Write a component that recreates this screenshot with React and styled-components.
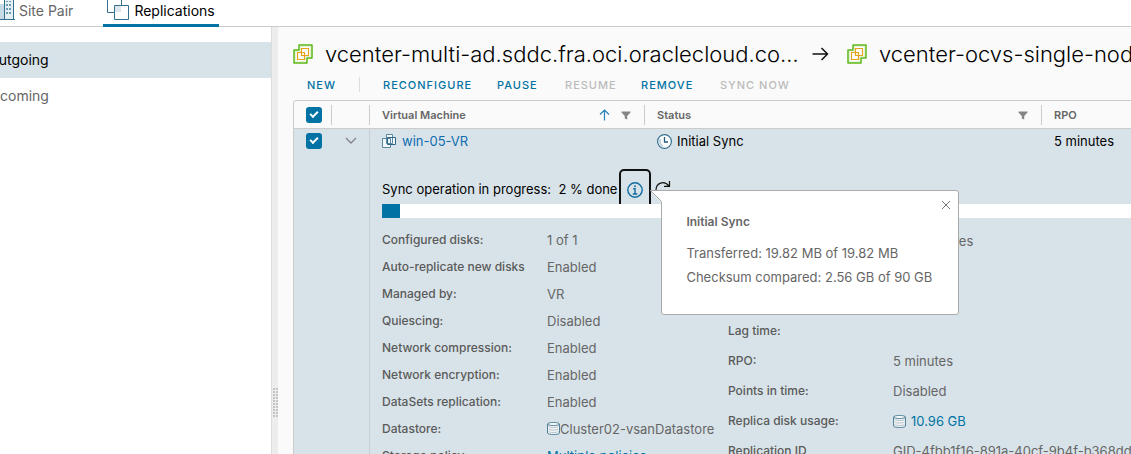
import React from "react";
import styled, { createGlobalStyle } from "styled-components";

const GlobalStyle = createGlobalStyle`
  *, *::before, *::after { box-sizing: border-box; }
  html, body { margin: 0; overflow: hidden; }
  body {
    font-family: Inter, "Open Sans", sans-serif;
    font-size: 13px;
    line-height: 18px;
    color: #666;
    background: #fff;
  }
  button { font: inherit; border: 0; padding: 0; background: none; cursor: pointer; }
  a { text-decoration: none; }
  svg { display: block; flex: none; }
`;

const Shell = styled.div`
  display: flex;
  flex-direction: column;
  height: 100vh;
  margin-left: -24px;
  overflow: hidden;
`;

const TabBar = styled.nav`
  display: flex;
  flex: none;
  gap: 26px;
  height: 27px;
  padding-left: 20px;
  border-bottom: 1px solid #ccc;
`;

const Tab = styled.a`
  display: flex;
  align-items: flex-start;
  gap: 4px;
  height: 27px;
  padding: 2px 4px 0;
  font-size: 14px;
  color: ${(p) => (p.$active ? "#000" : "#666")};
  box-shadow: ${(p) => (p.$active ? "inset 0 -3px #0072a3" : "none")};
  svg { margin-top: -2px; }
`;

const Body = styled.div`
  display: flex;
  flex: 1;
  min-height: 0;
`;

const Sidebar = styled.nav`
  flex: none;
  width: 295px;
  padding-top: 15px;
  background: #fff;
`;

const SideLink = styled.a`
  display: block;
  padding: 9px 12px;
  font-size: 14px;
  color: ${(p) => (p.$active ? "#000" : "#666")};
  background: ${(p) => (p.$active ? "#d8e3e9" : "transparent")};
`;

const Splitter = styled.div`
  display: flex;
  flex: none;
  justify-content: flex-end;
  width: 7px;
  padding-top: 361px;
  background: #ededed;
  border-left: 1px solid #ddd;
`;

const Main = styled.main`
  flex: 1;
  min-width: 0;
  padding: 12px 0 0 15px;
  background: #fafafa;
  overflow: hidden;
`;

const TitleBar = styled.header`
  display: flex;
  align-items: center;
  height: 30px;
`;

const SiteName = styled.h1`
  flex: none;
  width: ${(p) => p.$width || "auto"};
  margin: 0 0 0 12px;
  font-size: 22px;
  font-weight: 300;
  line-height: 30px;
  color: #000;
  white-space: nowrap;
`;

const ArrowBox = styled.span`
  margin: 0 18px 0 10px;
`;

const Toolbar = styled.div`
  display: flex;
  align-items: center;
  height: 31px;
  padding-left: 14px;
`;

const Action = styled.button`
  font-size: 11px !important;
  font-weight: 500 !important;
  letter-spacing: 1px;
  text-align: left;
  width: ${(p) => p.$width};
  white-space: nowrap;
  color: ${(p) => (p.disabled ? "#bbb" : "#0072a3")};
`;

const Divider = styled.span`
  width: 1px;
  height: 15px;
  margin-right: 23px;
  background: #ddd;
`;

const Grid = styled.table`
  width: 100%;
  min-width: 1002px;
  table-layout: fixed;
  border-collapse: separate;
  border-spacing: 0;
  border: 1px solid #ccc;
  border-radius: 3px 0 0 0;
`;

const HeadCell = styled.th`
  height: 28px;
  padding: 4px 0 3px;
  font-size: 11px;
  font-weight: 600;
  text-align: left;
  border-bottom: 1px solid #ccc;
`;

const HeadInner = styled.div`
  display: flex;
  align-items: center;
  gap: 11px;
  height: 20px;
  padding: 0 13px 0 12px;
  border-left: ${(p) => (p.$plain ? "0" : "1px solid #ccc")};
  span { flex: 1; }
`;

const Cell = styled.td`
  padding: 3px 0 0 ${(p) => p.$pad || "12px"};
  height: 25px;
  color: #000;
  vertical-align: top;
  background: #d8e3e9;
  border-left: ${(p) => (p.$line ? "1px solid #c8ced2" : "0")};
`;

const CellInner = styled.div`
  display: flex;
  align-items: center;
  gap: 5px;
  height: 18px;
`;

const DetailCell = styled(Cell)`
  padding: 14px 10px 0 12px;
`;

const Check = styled.input`
  appearance: none;
  display: block;
  position: relative;
  flex: none;
  width: 16px;
  height: 16px;
  margin: 0;
  background: #0072a3;
  border-radius: 3px;
  &::after {
    content: "";
    position: absolute;
    left: 4px;
    top: 4px;
    width: 8px;
    height: 5px;
    border: solid #fff;
    border-width: 0 0 2px 2px;
    transform: rotate(-45deg);
  }
`;

const Link = styled.a`
  color: ${(p) => (p.$bright ? "#0f6cb0" : "#0072a3")};
`;

const SyncLine = styled.div`
  display: flex;
  align-items: flex-start;
  height: 36px;
  color: #000;
`;

const SyncText = styled.span`
  padding-top: 12px;
  white-space: pre;
`;

const InfoAnchor = styled.div`
  position: relative;
  margin: 1px 0 0 2px;
`;

const InfoButton = styled.button`
  display: flex;
  justify-content: center;
  width: 32px;
  height: 42px;
  padding-top: 11px !important;
  border: 2px solid #111 !important;
  border-radius: 5px;
`;

const Refresh = styled.button`
  margin: 13px 0 0 4px;
`;

const Track = styled.div`
  position: relative;
  z-index: 1;
  height: 14px;
  background: #fff;
`;

const Fill = styled.div`
  height: 100%;
  background: #0072a3;
`;

const Popover = styled.section`
  position: absolute;
  z-index: 2;
  top: 21px;
  left: 42px;
  width: 298px;
  height: 125px;
  padding: 22px 24px;
  color: #666;
  background: #fff;
  border: 1px solid #aaa;
  border-radius: 0 3px 3px 3px;
  white-space: nowrap;
  h2 { margin: 0 0 10px; font-size: 12px; line-height: 18px; font-weight: 600; }
  p { margin: 0; line-height: 24px; }
`;

const Pointer = styled.svg`
  position: absolute;
  top: -1px;
  left: -12px;
`;

const Close = styled.button`
  position: absolute;
  top: 9px;
  right: 7px;
`;

const Details = styled.div`
  display: flex;
  align-items: flex-start;
  padding-top: 8px;
  color: #666;
`;

const DetailList = styled.dl`
  display: grid;
  grid-template-columns: 165px auto;
  grid-auto-rows: ${(p) => p.$row};
  align-items: center;
  flex: none;
  width: ${(p) => p.$width};
  margin: 0;
  white-space: nowrap;
`;

const Term = styled.dt`
  font-size: 12px;
  font-weight: 500;
  color: #5a5a5a;
`;

const Value = styled.dd`
  display: flex;
  align-items: center;
  gap: ${(p) => p.$gap || "0"};
  margin: 0;
`;

const BuildingIcon = () => (
  <svg width="15" height="20" viewBox="0 0 15 20" fill="none">
    <path d="M0 4h4v15H0z" fill="#c6dbe5" />
    <path d="M5 0h8v19H5z" fill="#e4eff4" />
    <path d="M4.500 0v19.500M13.500 0v19.500M0 19.500h15" stroke="#356f8e" />
    <path d="M6 4h2v2H6zM9 4h2v2H9zM6 8h2v2H6zM9 8h2v2H9zM6 12h2v2H6zM9 12h2v2H9zM6 1h2v1H6zM9 1h2v1H9z" fill="#6d9bb1" />
  </svg>
);

const ReplicaTabIcon = () => (
  <svg width="23" height="20" viewBox="0 0 23 20" fill="none" stroke="#356f8e">
    <path d="M8 6h6v6H8z" fill="#dce6eb" stroke="none" />
    <path d="M.500 0v12.500H8M14.500 0v6" />
    <path d="M7.500 5.500h14v14h-14z" />
  </svg>
);

const VcenterIcon = () => (
  <svg width="20" height="20" viewBox="0 0 20 20" fill="none">
    <path d="M6 1h13v13h-5v5H1V6h5z" fill="#fff" stroke="#5cb615" strokeWidth="1.500" strokeLinejoin="round" />
    <path d="M7.500 2.500h10v10h-5v5h-10v-10h5z" stroke="#e3f1d4" />
    <path d="M8.500 4.500h7v7h-7zM4.500 8.500h7v7h-7z" stroke="#e5a21a" strokeWidth="1.200" />
  </svg>
);

const VmIcon = () => (
  <svg width="15" height="15" viewBox="0 0 15 15" fill="none">
    <path d="M4 1h7v3h3v7H9v3H1V5h3z" fill="#f4f8fa" />
    <path d="M.500 4.500h8v9h-8z" stroke="#5b89a2" />
    <path d="M4.500.500h6v9h-6z" stroke="#5b89a2" />
    <path d="M5.500 3.500h8v7h-8z" stroke="#2c6585" />
  </svg>
);

const ClockIcon = () => (
  <svg width="15" height="15" viewBox="0 0 15 15" fill="none" stroke="#356f8e">
    <circle cx="7.500" cy="7.500" r="6.900" fill="#fff" strokeWidth="1.200" />
    <path d="M3.500 5A5 5 0 0 0 6 12" stroke="#c3d5de" strokeWidth="2" />
    <path d="M7.500 3v5H11" stroke="#245d7c" strokeWidth="1.300" />
  </svg>
);

const DiskIcon = () => (
  <svg width="13" height="13" viewBox="0 0 13 13" fill="none" stroke="#4f8198">
    <path d="M.500 2v9c0 2 12 2 12 0V2" fill="#f3f5f7" />
    <path d="M1.500 4.500c1 1.300 9 1.300 10 0M1.500 7c1 1.300 9 1.300 10 0M1.500 9.500c1 1.300 9 1.300 10 0" stroke="#b5c1c8" />
    <ellipse cx="6.500" cy="2" rx="6" ry="1.500" fill="#fff" />
  </svg>
);

const FilterIcon = () => (
  <svg width="10" height="9" viewBox="0 0 10 9">
    <path d="M.500.500h9v1L6.200 5v3.500L3.800 7.500V5L.500 1.500z" fill="#858585" />
  </svg>
);

const RightArrow = () => (
  <svg width="17" height="14" viewBox="0 0 17 14" fill="none" stroke="#111" strokeWidth="1.500">
    <path d="M.500 7h15M9.500 1l6 6-6 6" />
  </svg>
);

const leftDetails = [
  ["Configured disks:", "1 of 1"],
  ["Auto-replicate new disks", "Enabled"],
  ["Managed by:", "VR"],
  ["Quiescing:", "Disabled"],
  ["Network compression:", "Enabled"],
  ["Network encryption:", "Enabled"],
  ["DataSets replication:", "Enabled"],
  ["Datastore:", <><DiskIcon />Cluster02-vsanDatastore</>],
  ["Storage policy:", <Link href="#policies">Multiple policies</Link>],
];

const rightDetails = [
  ["Last sync duration:", "~ 22 minutes"],
  ["Last sync size:", ""],
  ["Last instance:", ""],
  ["Lag time:", ""],
  ["RPO:", "5 minutes"],
  ["Points in time:", "Disabled"],
  ["Replica disk usage:", <><DiskIcon /><Link href="#usage">10.96 GB</Link></>],
  ["Replication ID", "GID-4fbb1f16-891a-40cf-9b4f-b368ddf"],
];

function DetailRows({ items, gap, ...rest }) {
  return (
    <DetailList {...rest}>
      {items.map(([label, value]) => (
        <React.Fragment key={label}>
          <Term>{label}</Term>
          <Value $gap={gap}>{value}</Value>
        </React.Fragment>
      ))}
    </DetailList>
  );
}

function SyncPopover() {
  return (
    <Popover aria-label="Sync details">
      <Pointer width="12" height="13" viewBox="0 0 12 13">
        <path d="M0 .500h12V13z" fill="#fff" />
        <path d="M12 .500H.500l11 11V13" fill="none" stroke="#aaa" />
      </Pointer>
      <Close aria-label="Close">
        <svg width="10" height="10" viewBox="0 0 10 10" stroke="#777">
          <path d="M1 1l8 8M9 1L1 9" />
        </svg>
      </Close>
      <h2>Initial Sync</h2>
      <p>Transferred: 19.82 MB of 19.82 MB</p>
      <p>Checksum compared: 2.56 GB of 90 GB</p>
    </Popover>
  );
}

function SyncProgress({ percent }) {
  return (
    <>
      <SyncLine>
        <SyncText>Sync operation in progress:  {percent} % done</SyncText>
        <InfoAnchor>
          <InfoButton aria-label="Sync information">
            <svg width="16" height="16" viewBox="0 0 16 16" fill="none" stroke="#0f6c9f" strokeWidth="1.400">
              <circle cx="8" cy="8" r="7.200" />
              <path d="M6.200 6.800H8v5M5.800 12h4.500" />
              <circle cx="8" cy="4.200" r=".6" fill="#0f6c9f" strokeWidth=".8" />
            </svg>
          </InfoButton>
          <SyncPopover />
        </InfoAnchor>
        <Refresh aria-label="Refresh">
          <svg width="16" height="14" viewBox="0 0 16 14" fill="none" stroke="#111" strokeWidth="1.200">
            <path d="M1 9C1 2 9-1 14 5M14.500 0v5.400H9" />
          </svg>
        </Refresh>
      </SyncLine>
      <Track role="progressbar" aria-label="Sync progress" aria-valuenow={percent}>
        <Fill style={{ width: `${percent}%` }} />
      </Track>
    </>
  );
}

export default function App() {
  return (
    <>
      <GlobalStyle />
      <Shell>
        <TabBar>
          <Tab href="#site-pair"><BuildingIcon />Site Pair</Tab>
          <Tab href="#replications" $active><ReplicaTabIcon />Replications</Tab>
        </TabBar>
        <Body>
          <Sidebar>
            <SideLink href="#outgoing" $active>Outgoing</SideLink>
            <SideLink href="#incoming">Incoming</SideLink>
          </Sidebar>
          <Splitter>
            <svg width="5" height="30" viewBox="0 0 5 30" fill="#c4c4c4">
              {Array.from({ length: 10 }, (_, i) => (
                <path key={i} d={`M0 ${i * 3}h2v2H0zM3 ${i * 3}h2v2H3z`} />
              ))}
            </svg>
          </Splitter>
          <Main>
            <TitleBar>
              <VcenterIcon />
              <SiteName $width="477px">vcenter-multi-ad.sddc.fra.oci.oraclecloud.co…</SiteName>
              <ArrowBox><RightArrow /></ArrowBox>
              <VcenterIcon />
              <SiteName>vcenter-ocvs-single-node.sddc</SiteName>
            </TitleBar>
            <Toolbar>
              <Action $width="52px">NEW</Action>
              <Divider />
              <Action $width="114px">RECONFIGURE</Action>
              <Action $width="68px">PAUSE</Action>
              <Action $width="76px" disabled>RESUME</Action>
              <Action $width="79px">REMOVE</Action>
              <Action $width="90px" disabled>SYNC NOW</Action>
            </Toolbar>
            <Grid>
              <colgroup>
                <col style={{ width: 37 }} />
                <col style={{ width: 38 }} />
                <col style={{ width: 275 }} />
                <col style={{ width: 397 }} />
                <col />
              </colgroup>
              <thead>
                <tr>
                  <HeadCell><HeadInner $plain><Check type="checkbox" defaultChecked aria-label="Select all" /></HeadInner></HeadCell>
                  <HeadCell><HeadInner /></HeadCell>
                  <HeadCell>
                    <HeadInner>
                      <span>Virtual Machine</span>
                      <svg width="11" height="12" viewBox="0 0 11 12" fill="none" stroke="#2582bd" strokeWidth="1.200">
                        <path d="M5.500 11.500V1M1 5.500L5.500 1 10 5.500" />
                      </svg>
                      <FilterIcon />
                    </HeadInner>
                  </HeadCell>
                  <HeadCell><HeadInner><span>Status</span><FilterIcon /></HeadInner></HeadCell>
                  <HeadCell><HeadInner><span>RPO</span></HeadInner></HeadCell>
                </tr>
              </thead>
              <tbody>
                <tr>
                  <Cell><CellInner><Check type="checkbox" defaultChecked aria-label="Select win-05-VR" /></CellInner></Cell>
                  <Cell $pad="14px">
                    <CellInner as="button" aria-label="Collapse row">
                      <svg width="12" height="8" viewBox="0 0 12 8" fill="none" stroke="#858585" strokeWidth="1.400">
                        <path d="M1 1l5 5 5-5" />
                      </svg>
                    </CellInner>
                  </Cell>
                  <Cell $line><CellInner><VmIcon /><Link $bright href="#win-05-VR">win-05-VR</Link></CellInner></Cell>
                  <Cell $pad="13px"><CellInner><ClockIcon />Initial Sync</CellInner></Cell>
                  <Cell $pad="13px"><CellInner>5 minutes</CellInner></Cell>
                </tr>
                <tr>
                  <Cell colSpan={2} />
                  <DetailCell colSpan={3} $line>
                    <SyncProgress percent={2} />
                    <Details>
                      <DetailRows items={leftDetails} $row="27px" $width="346px" />
                      <DetailRows items={rightDetails} $row="30px" $width="460px" gap="5px" />
                    </Details>
                  </DetailCell>
                </tr>
              </tbody>
            </Grid>
          </Main>
        </Body>
      </Shell>
    </>
  );
}
